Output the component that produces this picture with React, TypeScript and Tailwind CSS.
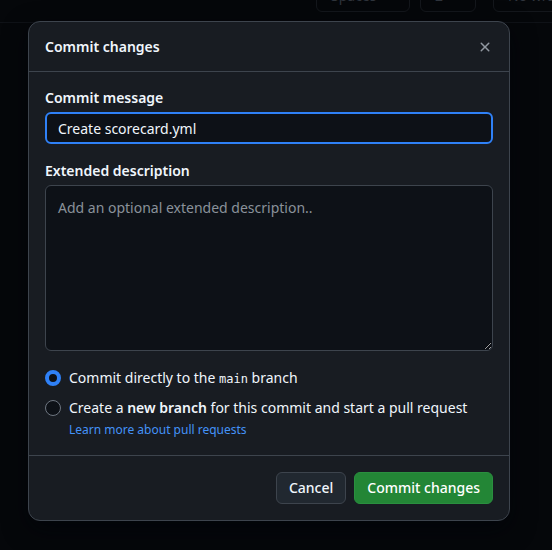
import { useState } from 'react';

function CloseIcon() {
  return (
    <svg width="16" height="16" viewBox="0 0 16 16" fill="currentColor">
      <path d="M3.72 3.72a.75.75 0 0 1 1.06 0L8 6.94l3.22-3.22a.749.749 0 0 1 1.275.326.749.749 0 0 1-.215.734L9.06 8l3.22 3.22a.749.749 0 0 1-.326 1.275.749.749 0 0 1-.734-.215L8 9.06l-3.22 3.22a.751.751 0 0 1-1.042-.018.751.751 0 0 1-.018-1.042L6.94 8 3.72 4.78a.75.75 0 0 1 0-1.06Z" />
    </svg>
  );
}

function Caret() {
  return (
    <svg width="16" height="16" viewBox="0 0 16 16" fill="currentColor">
      <path d="m4.427 7.427 3.396 3.396a.25.25 0 0 0 .354 0l3.396-3.396A.25.25 0 0 0 11.396 7H4.604a.25.25 0 0 0-.177.427Z" />
    </svg>
  );
}

function Radio({ checked }: { checked: boolean }) {
  return checked ? (
    <span className="w-4 h-4 shrink-0 rounded-full border-[4px] border-[#2f81f7] bg-[#0d1117]" />
  ) : (
    <span className="w-4 h-4 shrink-0 rounded-full border border-[#6e7681] bg-[#0d1117]" />
  );
}

export default function App() {
  const [message, setMessage] = useState('Create scorecard.yml');
  const [target, setTarget] = useState<'direct' | 'branch'>('direct');

  return (
    <div
      className="relative w-[552px] h-[550px] overflow-hidden bg-[#05070a]"
      style={{ fontFamily: '"Noto Sans", "Liberation Sans", sans-serif' }}
    >
      {/* dimmed editor toolbar behind the overlay */}
      <div className="h-[23px] border-b border-[#0f1217] overflow-hidden">
        <div className="flex items-center -mt-[20px] pl-[316px] text-[#2f343c] text-sm">
          <div className="shrink-0 w-[94px] h-8 flex items-center justify-between pl-[14px] pr-[8px] border border-[#14171c] rounded-md">
            Spaces
            <Caret />
          </div>
          <div className="shrink-0 w-[56px] h-8 ml-[10px] flex items-center justify-between pl-[14px] pr-[8px] border border-[#14171c] rounded-md">
            2
            <Caret />
          </div>
          <div className="shrink-0 w-[90px] h-8 ml-[17px] flex items-center pl-[14px] border border-[#14171c] rounded-md whitespace-nowrap">
            No wrap
          </div>
        </div>
      </div>

      {/* dialog */}
      <div className="absolute left-[28px] top-[21px] w-[482px] rounded-xl border border-[#3d444d] bg-[#181c22] text-[#f0f6fc] shadow-[0_8px_24px_rgba(1,4,9,0.75)]">
        <div className="h-[50px] flex items-center justify-between px-4 border-b border-[#3d444d]">
          <h2 className="text-sm font-semibold">Commit changes</h2>
          <button className="text-[#9198a1]">
            <CloseIcon />
          </button>
        </div>

        <div className="px-4 pt-4 pb-4 border-b border-[#3d444d]">
          <label className="block text-sm font-semibold leading-5 mb-1">Commit message</label>
          <input
            value={message}
            onChange={(e) => setMessage(e.target.value)}
            className="w-full h-8 px-[11px] text-sm rounded-md border-2 border-[#2f81f7] bg-[#0d1117] text-[#f0f6fc] outline-none"
          />

          <label className="block text-sm font-semibold leading-5 mt-[17px] mb-1">Extended description</label>
          <textarea
            placeholder="Add an optional extended description.."
            className="block w-full h-[166px] px-3 pt-3 pb-[11px] text-sm leading-5 rounded-md border border-[#3d444d] bg-[#0d1117] text-[#f0f6fc] placeholder:text-[#8a919a] outline-none"
          />

          <div className="mt-[17px] flex flex-col gap-[10px] text-sm">
            <label className="flex items-center gap-2 h-5" onClick={() => setTarget('direct')}>
              <Radio checked={target === 'direct'} />
              <span>
                Commit directly to the{' '}
                <span className="text-xs" style={{ fontFamily: '"DejaVu Sans Mono", "Liberation Mono", monospace' }}>
                  main
                </span>{' '}
                branch
              </span>
            </label>
            <div>
              <label className="flex items-center gap-2 h-5" onClick={() => setTarget('branch')}>
                <Radio checked={target === 'branch'} />
                <span>
                  Create a <span className="font-semibold">new branch</span> for this commit and start a pull request
                </span>
              </label>
              <a className="block ml-[24px] mt-[3px] text-xs leading-[18px] text-[#4493f8]" href="#">
                Learn more about pull requests
              </a>
            </div>
          </div>
        </div>

        <div className="flex justify-end gap-2 px-4 py-4">
          <button className="h-8 px-3 text-sm font-medium rounded-md border border-[#3d444d] bg-[#212830] text-[#f0f6fc]">
            Cancel
          </button>
          <button className="h-8 px-3 text-sm font-medium rounded-md border border-[#2a8f3f] bg-[#238636] text-white">
            Commit changes
          </button>
        </div>
      </div>
    </div>
  );
}
